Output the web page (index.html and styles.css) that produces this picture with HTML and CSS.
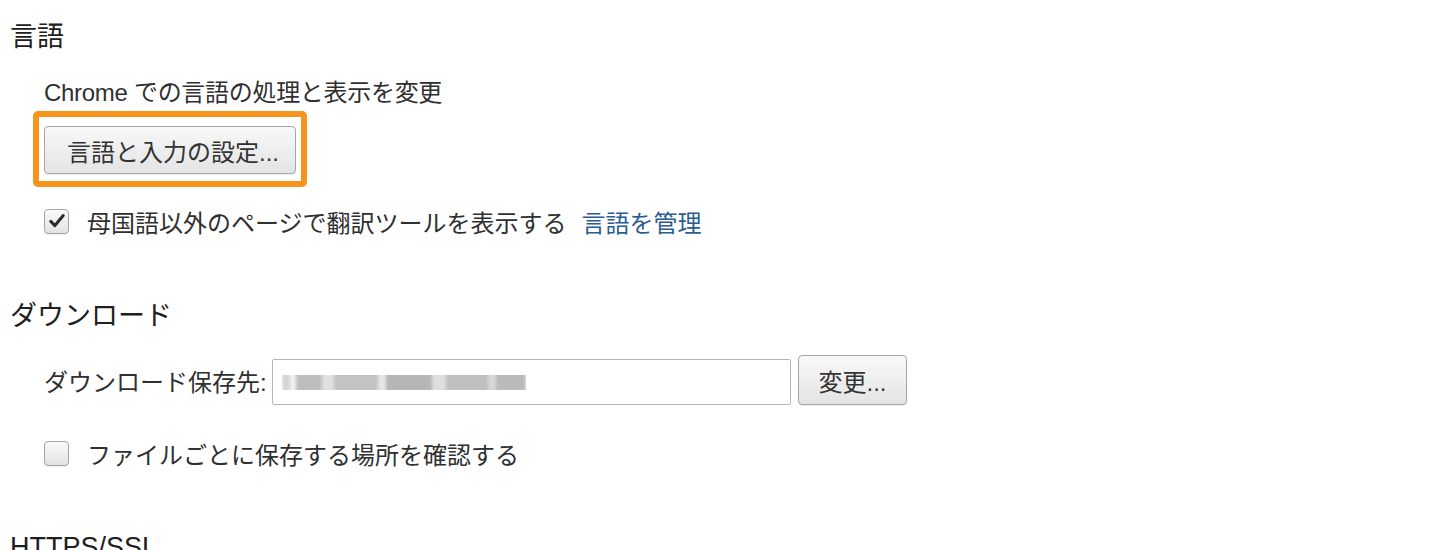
FILE: index.html
```html
<!DOCTYPE html>
<html lang="ja">
<head>
  <meta charset="UTF-8">
  <title>設定</title>
  <link rel="stylesheet" href="styles.css">
</head>
<body>

<section class="section">
  <h3>言語</h3>
  <div class="section-body">
    <div class="desc">Chrome での言語の処理と表示を変更</div>
    <div class="highlight">
      <button class="btn btn-wide">言語と入力の設定...</button>
    </div>
    <label class="check-row first-check">
      <span class="checkbox checked">
        <svg viewBox="0 0 24 24" width="20" height="20"><path d="M4.5 12.5 L9.5 17.5 L19.5 5.5" fill="none" stroke="#2b2b2b" stroke-width="3.6" stroke-linecap="round" stroke-linejoin="round"/></svg>
      </span>
      <span>母国語以外のページで翻訳ツールを表示する</span>
      <a class="link" href="#">言語を管理</a>
    </label>
  </div>
</section>

<section class="section downloads">
  <h3>ダウンロード</h3>
  <div class="section-body">
    <div class="path-row">
      <span class="path-label">ダウンロード保存先:</span>
      <div class="path-input"><span class="blurred"></span></div>
      <button class="btn btn-change">変更...</button>
    </div>
    <label class="check-row second-check">
      <span class="checkbox"></span>
      <span>ファイルごとに保存する場所を確認する</span>
    </label>
  </div>
</section>

<section class="section ssl">
  <h3>HTTPS/SSL</h3>
</section>

</body>
</html>
```

FILE: styles.css
```css
body {
  margin: 0;
  padding: 19px 0 0 10px;
  background: #fff;
  color: #303030;
  font-family: "Liberation Sans", "Noto Sans CJK JP", sans-serif;
  font-size: 24px;
  overflow: hidden;
}

h3 {
  margin: 0;
  font-size: 27px;
  font-weight: normal;
  line-height: 36px;
  color: #202020;
}

.section-body {
  padding-left: 34px;
}

.desc {
  margin-top: 23px;
  line-height: 30px;
  letter-spacing: -0.3px;
}

.highlight {
  display: flex;
  width: max-content;
  margin: 3px 0 0 -11px;
  padding: 9px 5px 7px 5px;
  border: 6px solid #f7941d;
  border-radius: 5px;
}

.btn {
  display: block;
  height: 48px;
  padding: 0 22px;
  font-family: inherit;
  font-size: 24px;
  color: #333;
  white-space: nowrap;
  background: linear-gradient(#f8f8f8, #e4e4e4);
  border: 1px solid #a6a6a6;
  border-radius: 4px;
  box-shadow: 0 1px 1px rgba(0,0,0,0.08);
}

.btn-wide {
  width: 252px;
  text-align: left;
}

.check-row {
  display: flex;
  align-items: center;
  height: 30px;
}

.first-check {
  margin-top: 19px;
}

.checkbox {
  width: 25px;
  height: 25px;
  box-sizing: border-box;
  margin-right: 18px;
  display: flex;
  align-items: center;
  justify-content: center;
  border: 1px solid #a3a3a3;
  border-radius: 4px;
  background: linear-gradient(#fafafa, #e2e2e2);
  box-shadow: inset 0 1px 1px rgba(255,255,255,0.8), 0 1px 1px rgba(0,0,0,0.06);
}

.link {
  margin-left: 15px;
  color: #2c5c92;
  text-decoration: none;
}

.downloads {
  margin-top: 62px;
}

.path-row {
  display: flex;
  align-items: flex-end;
  margin-top: 21px;
  height: 50px;
}

.path-label {
  align-self: center;
  margin-right: 4px;
  width: 224px;
}

.path-input {
  width: 519px;
  height: 46px;
  box-sizing: border-box;
  border: 1px solid #b5b5b5;
  border-radius: 2px;
  display: flex;
  align-items: center;
  padding-left: 9px;
}

/* pixelated placeholder for the hidden folder path */
.blurred {
  display: block;
  width: 244px;
  height: 20px;
  background:
    linear-gradient(90deg,
      #c8c8c8 0 8px, #eee 8px 14px, #a9a9a9 14px 40px, #d6d6d6 40px 52px,
      #b0b0b0 52px 96px, #ddd 96px 104px, #9e9e9e 104px 150px, #d4d4d4 150px 164px,
      #aaa 164px 206px, #ccc 206px 214px, #a4a4a4 214px 244px);
  opacity: 0.75;
  filter: blur(1.5px);
  clip-path: inset(3px 0 2px 0);
}

.btn-change {
  width: 109px;
  height: 50px;
  margin-left: 7px;
  padding: 0;
  text-align: center;
}

.second-check {
  margin-top: 33px;
}

.ssl {
  margin-top: 61px;
}
```
